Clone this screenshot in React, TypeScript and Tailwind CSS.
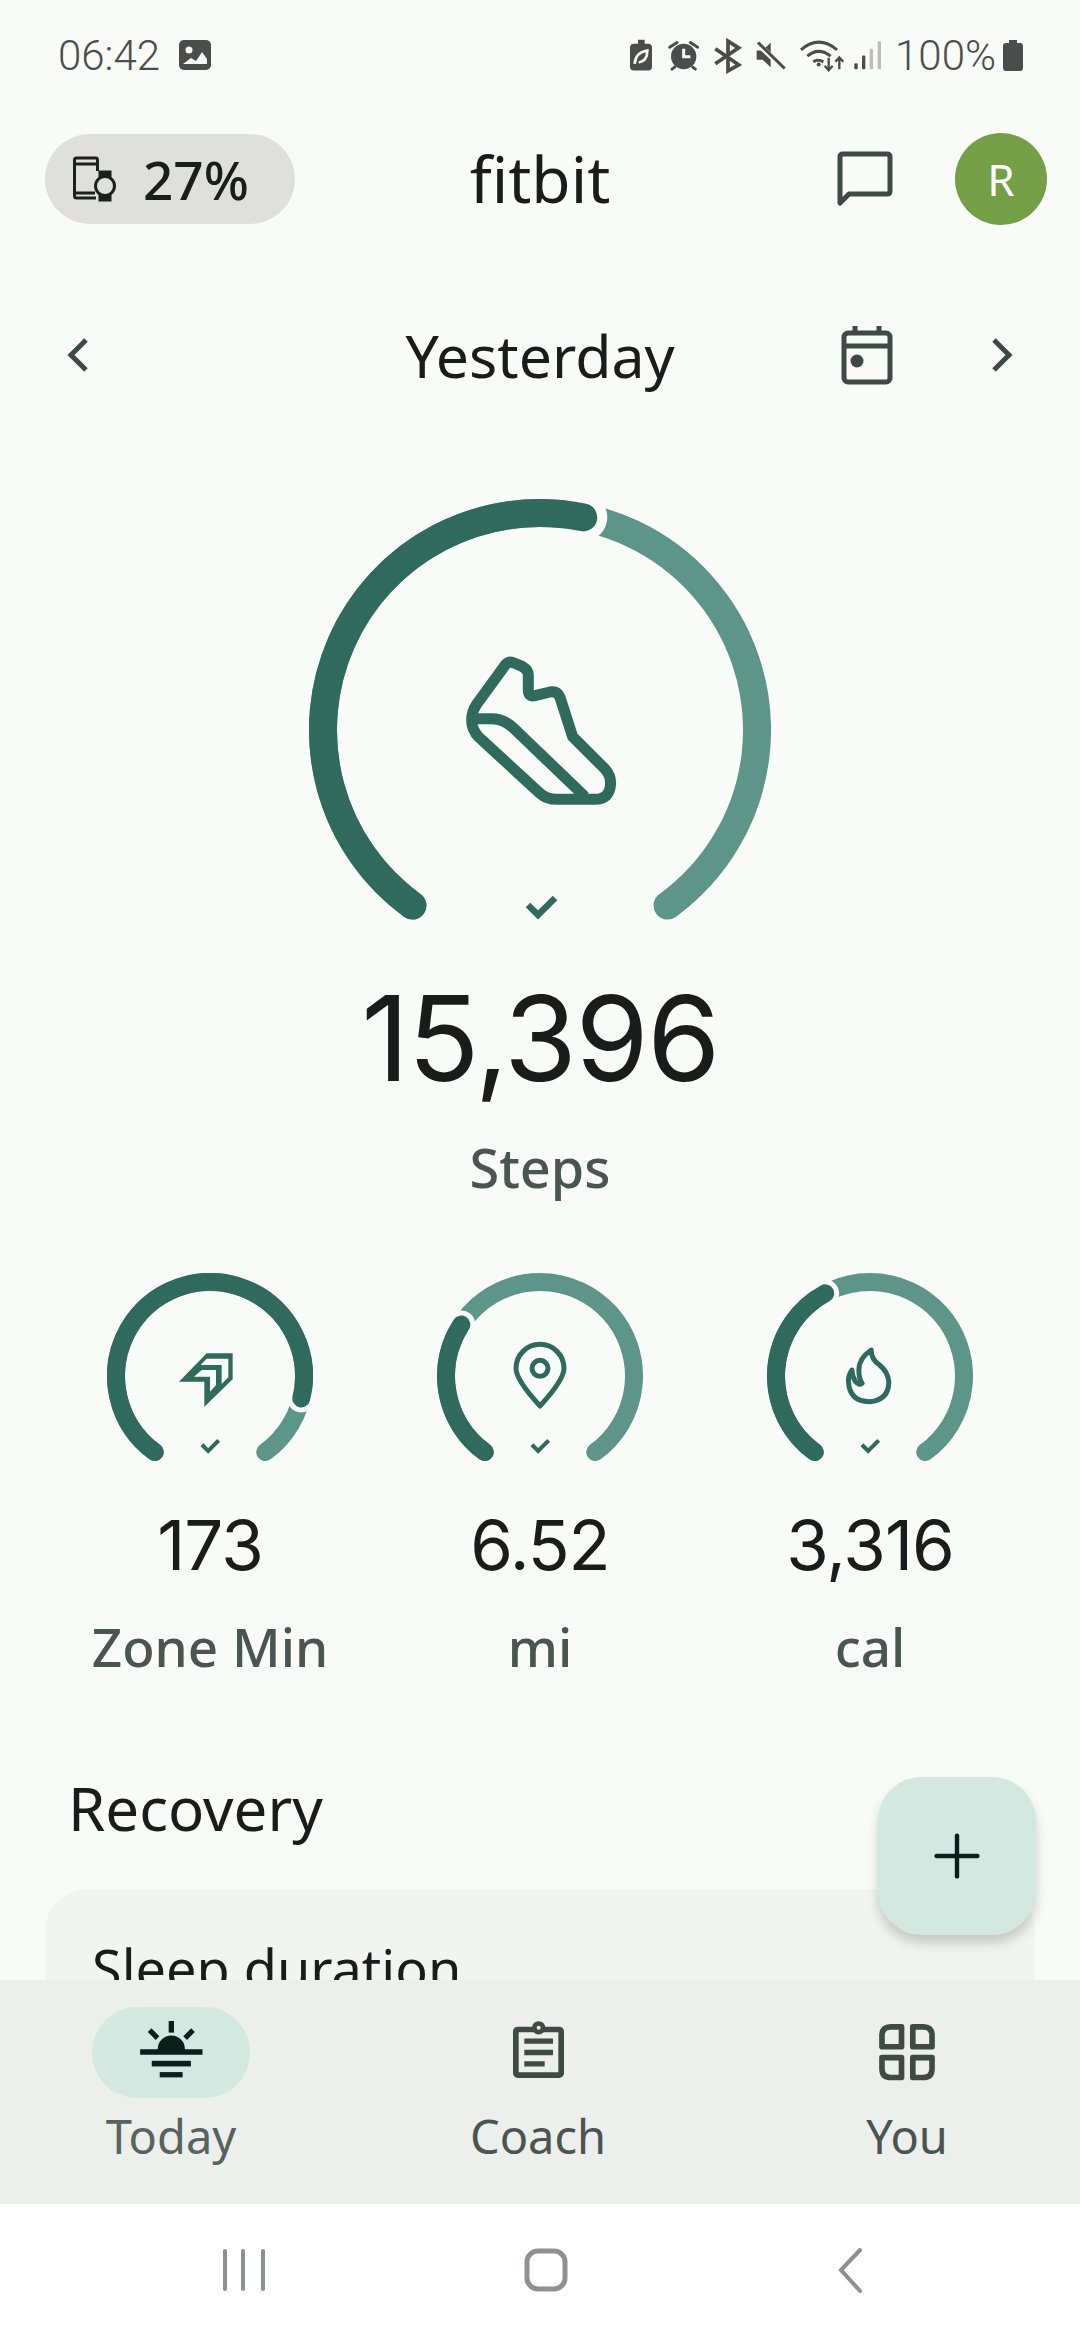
import { Plus } from 'lucide-react'

const BG = '#f8fbf8'
const DARK = '#2f6a5d'
const LIGHT = '#5e9589'

function polar(cx: number, cy: number, r: number, deg: number) {
  const a = (deg * Math.PI) / 180
  return [cx + r * Math.sin(a), cy - r * Math.cos(a)]
}

function arc(cx: number, cy: number, r: number, from: number, to: number) {
  const [x1, y1] = polar(cx, cy, r, from)
  const [x2, y2] = polar(cx, cy, r, to)
  const large = to - from > 180 ? 1 : 0
  return `M${x1} ${y1}A${r} ${r} 0 ${large} 1 ${x2} ${y2}`
}

function Gauge({ size, r, stroke, gap, end, children }: { size: number; r: number; stroke: number; gap: number; end: number; children?: React.ReactNode }) {
  const c = size / 2
  return (
    <svg width={size} height={size} viewBox={`0 0 ${size} ${size}`} fill="none" className="block">
      <path d={arc(c, c, r, -144, 144)} stroke={LIGHT} strokeWidth={stroke} strokeLinecap="round" />
      <path d={arc(c, c, r, end - 0.01, end)} stroke={BG} strokeWidth={stroke + gap} strokeLinecap="round" />
      <path d={arc(c, c, r, -144, end)} stroke={DARK} strokeWidth={stroke} strokeLinecap="round" />
      {children}
    </svg>
  )
}

function Check({ x, y, s }: { x: number; y: number; s: number }) {
  return (
    <path
      d={`M${x - 13 * s} ${y - 2 * s}L${x - 3 * s} ${y + 8 * s}L${x + 14 * s} ${y - 9 * s}`}
      stroke={DARK}
      strokeWidth={6.5 * s}
    />
  )
}

function StatusBar() {
  return (
    <div className="flex h-[110px] items-center justify-between pl-[58px] pr-[56px] font-['Roboto',sans-serif] text-[42px] font-light text-[#4b4d4c]">
      <div className="flex items-center gap-[18px]">
        <span>06:42</span>
        <svg width="34" height="32" viewBox="0 0 34 32">
          <rect x="1" y="1" width="32" height="30" rx="5" fill="#4b4d4c" />
          <circle cx="11" cy="11" r="3.5" fill="#f8fbf8" />
          <path d="M5 25l8-6 5 3 6-9 5 7v5H5z" fill="#f8fbf8" />
        </svg>
      </div>
      <div className="flex items-center">
        <svg width="260" height="37" viewBox="75 50 780 110" className="mr-[8px]" fill="#4b4d4c">
          {/* battery saver */}
          <path d="M100 70h8V58h20v12h10q12 0 12 12v56q0 12-12 12h-42q-12 0-12-12V82q0-12 12-12z" />
          <path d="M98 130q2-34 38-40q0 32-26 36" stroke="#f8fbf8" strokeWidth="8" fill="none" />
          {/* alarm */}
          <circle cx="245" cy="108" r="38" />
          <path d="M245 85v24h20" stroke="#f8fbf8" strokeWidth="9" fill="none" />
          <path d="M203 80l22-14M287 80l-22-14M218 140l-8 6M272 140l8 6" stroke="#4b4d4c" strokeWidth="9" strokeLinecap="round" fill="none" />
          {/* bluetooth */}
          <path d="M340 85l70 48-32 18V62l32 20-70 48" stroke="#4b4d4c" strokeWidth="11" fill="none" />
          {/* mute */}
          <path d="M464 90h18l24-24v74l-24-22h-18z" />
          <path d="M465 68l82 78" stroke="#f8fbf8" strokeWidth="16" />
          <path d="M468 66l80 78" stroke="#4b4d4c" strokeWidth="9" fill="none" />
          {/* wifi */}
          <path d="M597 88q53-46 108 0M616 107q34-29 70 0M634 124q14-9 30 0" stroke="#4b4d4c" strokeWidth="9" fill="none" />
          <circle cx="650" cy="132" r="6" />
          <path d="M680 112v36M668 136l12 13 12-13M712 146v-32M700 124l12-13 12 13" stroke="#4b4d4c" strokeWidth="7" fill="none" />
          {/* signal */}
          <rect x="757" y="128" width="10" height="18" rx="3" />
          <rect x="780" y="105" width="10" height="41" rx="3" />
          <rect x="803" y="85" width="10" height="61" rx="3" fill="#bbbdbb" />
          <rect x="827" y="62" width="10" height="84" rx="3" fill="#bbbdbb" />
        </svg>
        <span>100%</span>
        <svg width="22" height="31" viewBox="0 0 22 31" className="ml-[6px]">
          <path d="M4 3h3V0h8v3h3q3 0 3 3v22q0 3-3 3H4q-3 0-3-3V6q0-3 3-3z" fill="#4b4d4c" />
        </svg>
      </div>
    </div>
  )
}

function Header() {
  return (
    <div className="mt-[23px] grid h-[92px] grid-cols-[1fr_auto_1fr] items-center pl-[45px] pr-[33px]">
      <div className="flex h-[90px] w-[250px] items-center gap-[25px] rounded-full bg-[#dfe0de] pl-[27px]">
        <svg width="46" height="46" viewBox="0 0 46 46" fill="none" stroke="#1c1f1e" strokeWidth="3">
          <path d="M24 42H4.500Q2.500 42 2.500 40V4q0-2 2-2H24q1.500 0 1.500 2v11M3 8h22M3 37h20" />
          <circle cx="33" cy="30" r="9.500" />
          <path d="M28 21v-5h10v5M28 39v5h10v-5" fill="#1c1f1e" />
        </svg>
        <span className="text-[53px] font-medium leading-none text-[#1b1d1c]">27%</span>
      </div>
      <span className="mr-[12px] text-[64px] leading-none text-[#191c1b]">fitbit</span>
      <div className="flex items-center justify-end gap-[61px]">
        <svg width="58" height="58" viewBox="0 0 58 58" fill="none">
          <path d="M4 53V7q0-3 3-3h44q3 0 3 3v34q0 3-3 3H13z" stroke="#3f4946" strokeWidth="5" strokeLinejoin="round" />
        </svg>
        <div className="flex h-[92px] w-[92px] items-center justify-center rounded-full bg-[#759f47] text-[44px] text-white">R</div>
      </div>
    </div>
  )
}

function DateRow() {
  return (
    <div className="mt-[94px] grid h-[72px] grid-cols-[1fr_auto_1fr] items-center pl-[66px] pr-[66px]">
      <svg width="24" height="36" viewBox="0 0 24 36" fill="none" stroke="#3f4946" strokeWidth="5">
        <path d="M20 3L5 18l15 15" />
      </svg>
      <span className="text-[59px] leading-none text-[#191c1b]">Yesterday</span>
      <div className="flex items-center justify-end gap-[97px]">
        <svg width="52" height="60" viewBox="0 0 52 60" fill="none">
          <rect x="3" y="8" width="46" height="49" rx="4" stroke="#3f4946" strokeWidth="5" />
          <path d="M3 21h46" stroke="#3f4946" strokeWidth="5" />
          <path d="M14 1v9M38 1v9" stroke="#3f4946" strokeWidth="5" />
          <circle cx="16" cy="36" r="6.500" fill="#3f4946" />
        </svg>
        <svg width="24" height="36" viewBox="0 0 24 36" fill="none" stroke="#3f4946" strokeWidth="5">
          <path d="M4 3l15 15L4 33" />
        </svg>
      </div>
    </div>
  )
}

function MainGauge() {
  return (
    <div className="mt-[108px] flex flex-col items-center">
      <div className="h-[436px] w-[462px] overflow-hidden">
        <Gauge size={462} r={217} stroke={28} gap={20} end={11.5}>
          <g transform="translate(-29 -29) scale(0.3333)" stroke={DARK} strokeWidth="33" strokeLinejoin="round" fill="none">
            <path d="M672 590Q685 570 705 580L728 590Q745 600 745 615L745 660Q745 682 765 677L810 666Q832 662 840 682L878 800L975 897Q992 915 992 940Q990 988 945 988L832 988Q800 988 780 970L597 802Q575 780 575 750Q575 725 590 703Z" />
            <path d="M578 746L635 746Q670 746 698 772L915 980" />
          </g>
          <Check x={232} y={408} s={1} />
        </Gauge>
      </div>
      <div className="mt-[44px] font-['Inter',sans-serif] text-[118px] font-normal leading-none tracking-[-1.500px] text-[#191c1b]">15,396</div>
      <div className="mt-[43px] text-[54px] font-medium leading-none text-[#4a5451]">Steps</div>
    </div>
  )
}

function SmallStat({ end, value, label, children }: { end: number; value: string; label: string; children: React.ReactNode }) {
  return (
    <div className="flex w-[330px] flex-col items-center">
      <div className="h-[195px] w-[206px] overflow-hidden">
        <Gauge size={206} r={94} stroke={18} gap={10} end={end}>
          {children}
          <Check x={103} y={173} s={0.62} />
        </Gauge>
      </div>
      <div className="mt-[43px] font-['Inter',sans-serif] text-[69px] leading-none tracking-[-1px] text-[#191c1b]">{value}</div>
      <div className="mt-[40px] text-[53px] font-medium leading-none text-[#4a5451]">{label}</div>
    </div>
  )
}

function BottomNav() {
  return (
    <div className="relative z-10 flex h-[224px] bg-[#edefec] pt-[27px] text-[#4a5451]">
      <div className="flex w-[342px] flex-col items-center">
        <div className="flex h-[91px] w-[158px] items-center justify-center rounded-full bg-[#d3e8e1]">
          <svg width="64" height="73" viewBox="179 77 192 220" fill="#0a1f1a">
            <path d="M235 177a41 41 0 0 1 82 0h53v17H182v-17z" />
            <rect x="268" y="92" width="16" height="35" />
            <path d="M216 114l24 24-11 11-24-24zM336 114l-24 24 11 11 24-24z" />
            <rect x="217" y="212" width="118" height="17" />
            <rect x="241" y="246" width="69" height="16" />
          </svg>
        </div>
        <span className="mt-[15px] text-[47px] leading-none text-[#56635f]">Today</span>
      </div>
      <div className="flex w-[392px] flex-col items-center">
        <div className="flex h-[91px] items-center">
          <svg width="51" height="64" viewBox="100 62 153 191">
            <rect x="108.500" y="87" width="136" height="137" rx="6" fill="none" stroke="#3f4946" strokeWidth="17" />
            <circle cx="177" cy="82" r="20" fill="#3f4946" />
            <circle cx="177" cy="82" r="6" fill="#edefec" />
            <path d="M134 114h86v16h-86zM134 148h86v16h-86zM134 182h61v16h-61z" fill="#3f4946" />
          </svg>
        </div>
        <span className="mt-[15px] text-[47px] leading-none">Coach</span>
      </div>
      <div className="flex flex-1 flex-col items-center">
        <div className="flex h-[91px] items-center">
          <svg width="56" height="58" viewBox="1197 70 168 175" fill="none" stroke="#3f4946" strokeWidth="17" strokeLinejoin="round">
            <path d="M1205.500 138.500V105Q1205.500 78.500 1232 78.500H1264.500V138.500Z" />
            <path d="M1298.500 78.500H1330Q1356.500 78.500 1356.500 105V138.500H1298.500Z" />
            <path d="M1205.500 171.500H1264.500V231.500H1232Q1205.500 231.500 1205.500 205Z" />
            <path d="M1298.500 171.500H1356.500V205Q1356.500 231.500 1330 231.500H1298.500Z" />
          </svg>
        </div>
        <span className="mt-[15px] text-[47px] leading-none">You</span>
      </div>
    </div>
  )
}

function SystemNav() {
  return (
    <div className="flex h-[136px] items-center bg-white">
      <svg width="1080" height="136" viewBox="0 0 1080 136" fill="none" stroke="#8f9190" strokeWidth="4" strokeLinecap="round">
        <path d="M225 47v38M243 47v38M263 47v38" />
        <rect x="527" y="47" width="38" height="38" rx="11" strokeWidth="5" />
        <path d="M860 46L841 66l19 21" />
      </svg>
    </div>
  )
}

export default function App() {
  return (
    <div className="relative flex h-[2340px] w-[1080px] flex-col overflow-hidden bg-[#f8fbf8] font-['Noto_Sans',sans-serif]">
      <div className="min-h-0 flex-1 overflow-hidden">
        <StatusBar />
        <Header />
        <DateRow />
        <MainGauge />
        <div className="mt-[79px] flex justify-center">
          <SmallStat end={103.8} value="173" label="Zone Min">
            <g transform="translate(53 47) scale(0.3333)">
              <path d="M140 100H218V178L133 260V185H57Z" fill={DARK} />
              <path d="M140 116H205V172L185 192V135H122Z" fill={BG} />
              <path d="M125 150H168V196L150 215V170H102Z" fill={BG} />
            </g>
          </SmallStat>
          <SmallStat end={-56.8} value="6.52" label="mi">
            <g transform="translate(53 47) scale(0.3333)" stroke={DARK} strokeWidth="15" fill="none">
              <path d="M150 258Q78 180 78 145A72 72 0 0 1 222 145Q222 180 150 258Z" strokeLinejoin="round" />
              <circle cx="150" cy="145" r="24" />
            </g>
          </SmallStat>
          <SmallStat end={-28.5} value="3,316" label="cal">
            <g transform="translate(52.500 47) scale(0.3333)" stroke={DARK} strokeWidth="15" fill="none" strokeLinejoin="round">
              <path d="M155 90Q118 115 118 150Q118 175 128 190Q120 198 108 185Q98 170 97 150Q85 170 87 185Q90 245 150 245Q208 240 208 185Q205 155 180 135Q155 118 155 90Z" />
            </g>
          </SmallStat>
        </div>
        <div className="mt-[105px] pl-[68px] text-[60px] leading-none text-[#191c1b]">Recovery</div>
        <div className="mx-[45px] mt-[51px] h-[200px] rounded-t-[42px] bg-[#f2f4f1] pl-[47px] pt-[52px] text-[54px] leading-none text-[#191c1b]">Sleep duration</div>
      </div>
      <BottomNav />
      <SystemNav />
      <button className="absolute left-[878px] top-[1777px] z-20 flex h-[158px] w-[158px] items-center justify-center rounded-[44px] bg-[#d3e8e1] shadow-[0_8px_12px_rgba(0,0,0,0.18)]">
        <Plus size={70} strokeWidth={1.5} color="#0a1f1a" />
      </button>
    </div>
  )
}
